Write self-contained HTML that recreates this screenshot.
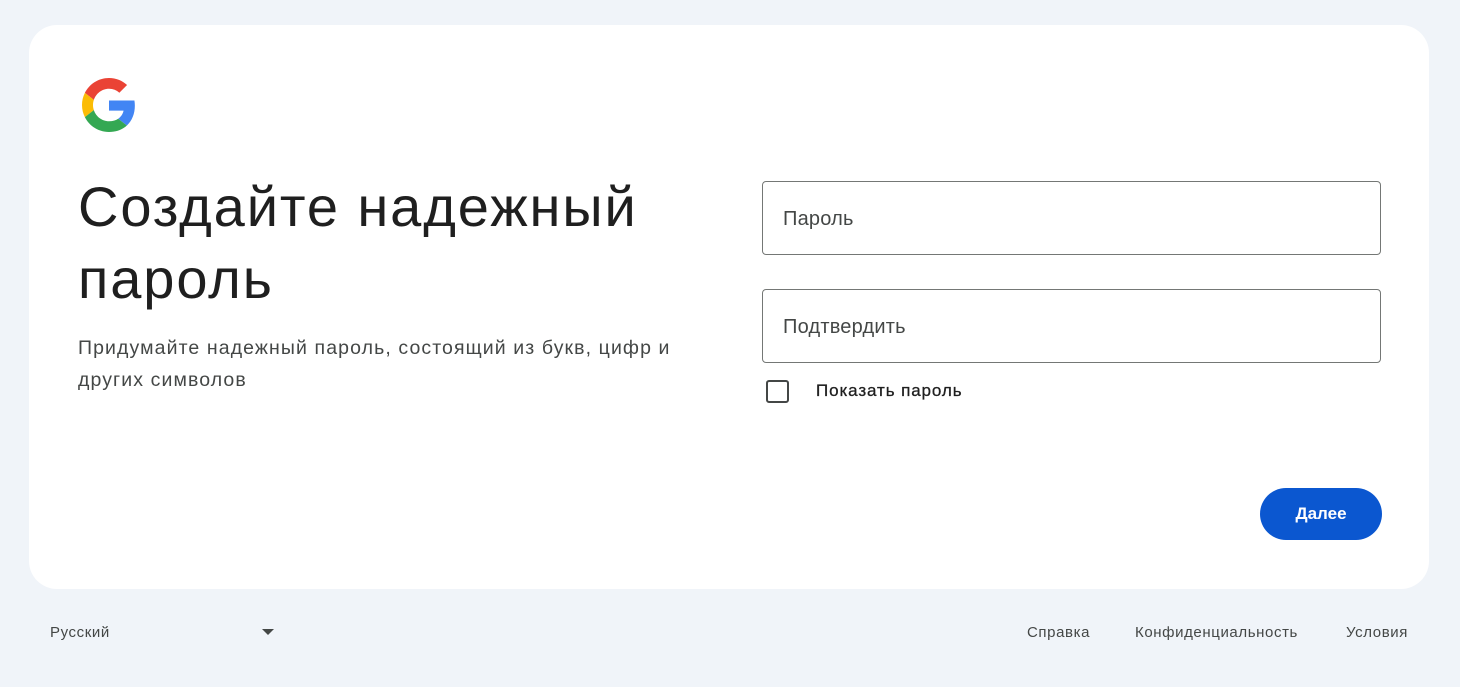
<!DOCTYPE html>
<html><head><meta charset="utf-8"><style>
*{margin:0;padding:0;box-sizing:border-box}
body{width:1460px;height:687px;background:#f0f4f9;font-family:"Liberation Sans",sans-serif;color:#1f1f1f;position:relative;overflow:hidden}
.card{position:absolute;left:29px;top:25px;width:1400px;height:564px;background:#fff;border-radius:28px}
.abs{position:absolute;white-space:nowrap}
h1{position:absolute;left:49px;top:146px;font-size:56px;font-weight:400;line-height:72px;color:#1f1f1f;letter-spacing:1.9px}
.sub{position:absolute;left:49px;top:307px;font-size:19.5px;line-height:32px;color:#444746;width:630px;letter-spacing:1.1px}
.inp{position:absolute;left:733px;width:619px;height:74px;border:1px solid #747775;border-radius:4px}
.inp span{position:absolute;left:20px;top:26px;font-size:20px;color:#444746;letter-spacing:0.2px}
.cb{position:absolute;left:737px;top:355px;width:23px;height:23px;border:2px solid #444746;border-radius:3px}
.btn{position:absolute;left:1231px;top:463px;width:122px;height:52px;border-radius:26px;background:#0b57d0;color:#fff;font-weight:bold;font-size:17px;text-align:center;line-height:52px}
.ft{position:absolute;top:624px;font-size:15px;color:#444746;letter-spacing:0.6px}
</style></head><body>
<div class="card">
<svg class="abs" style="left:53px;top:53px" width="54" height="54" viewBox="0 0 48 48">
<path fill="#EA4335" d="M24 9.5c3.54 0 6.71 1.22 9.21 3.6l6.85-6.85C35.9 2.38 30.47 0 24 0 14.62 0 6.51 5.38 2.56 13.22l7.98 6.19C12.43 13.72 17.74 9.5 24 9.5z"/>
<path fill="#4285F4" d="M46.98 24.55c0-1.57-.15-3.09-.38-4.55H24v9.02h12.94c-.58 2.960-2.26 5.48-4.78 7.18l7.73 6c4.51-4.18 7.09-10.36 7.09-17.650z"/>
<path fill="#FBBC05" d="M10.53 28.59c-.48-1.45-.76-2.99-.76-4.59s.27-3.14.76-4.59l-7.98-6.19C.92 16.46 0 20.12 0 24c0 3.88.92 7.54 2.56 10.78l7.970-6.19z"/>
<path fill="#34A853" d="M24 48c6.48 0 11.93-2.13 15.89-5.81l-7.73-6c-2.15 1.45-4.92 2.3-8.16 2.3-6.26 0-11.57-4.22-13.47-9.91l-7.98 6.19C6.51 42.62 14.62 48 24 48z"/>
</svg>
<h1>Создайте надежный<br>пароль</h1>
<div class="sub">Придумайте надежный пароль, состоящий из букв, цифр и<br>других символов</div>
<div class="inp" style="top:156px"><span>Пароль</span></div>
<div class="inp" style="top:264px"><span>Подтвердить</span></div>
<div class="cb"></div>
<div class="abs" style="left:787px;top:356px;font-size:17px;color:#1f1f1f;letter-spacing:0.9px;-webkit-text-stroke:0.3px #1f1f1f">Показать пароль</div>
<div class="btn">Далее</div>
</div>
<div class="ft" style="left:50px">Русский</div>
<svg class="abs" style="left:262px;top:629px" width="12" height="6"><path d="M0 0L12 0L6 6Z" fill="#444746"/></svg>
<div class="ft" style="left:1027px">Справка</div>
<div class="ft" style="left:1135px">Конфиденциальность</div>
<div class="ft" style="left:1346px">Условия</div>
</body></html>
